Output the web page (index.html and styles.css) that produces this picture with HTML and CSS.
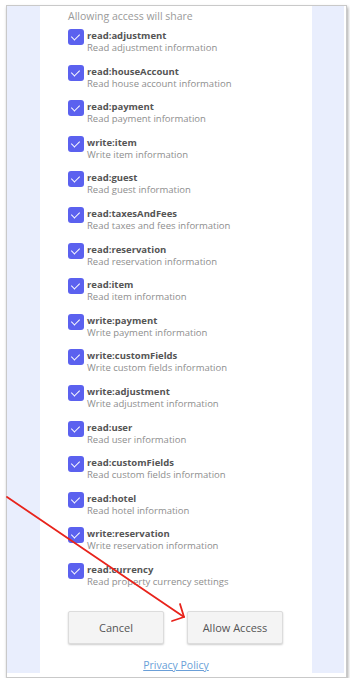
FILE: index.html
```html
<!DOCTYPE HTML>
<html lang="en">
    <head>
        <meta charset="UTF-8">
        <title>Allow Access</title>
        <meta name="viewport" content="width=device-width, initial-scale=1.0"/>
        <link rel="stylesheet" href="styles.css">
    </head>

    <body>
        <div class="frame">
            <div class="page">
                <div class="panel">
                    <p class="intro">Allowing access will share</p>

                    <ul class="scopes">
                        <li class="scope"><span class="check"></span><div><b>read:adjustment</b><span class="desc">Read adjustment information</span></div></li>
                        <li class="scope"><span class="check"></span><div><b>read:houseAccount</b><span class="desc">Read house account information</span></div></li>
                        <li class="scope"><span class="check"></span><div><b>read:payment</b><span class="desc">Read payment information</span></div></li>
                        <li class="scope"><span class="check"></span><div><b>write:item</b><span class="desc">Write item information</span></div></li>
                        <li class="scope"><span class="check"></span><div><b>read:guest</b><span class="desc">Read guest information</span></div></li>
                        <li class="scope"><span class="check"></span><div><b>read:taxesAndFees</b><span class="desc">Read taxes and fees information</span></div></li>
                        <li class="scope"><span class="check"></span><div><b>read:reservation</b><span class="desc">Read reservation information</span></div></li>
                        <li class="scope"><span class="check"></span><div><b>read:item</b><span class="desc">Read item information</span></div></li>
                        <li class="scope"><span class="check"></span><div><b>write:payment</b><span class="desc">Write payment information</span></div></li>
                        <li class="scope"><span class="check"></span><div><b>write:customFields</b><span class="desc">Write custom fields information</span></div></li>
                        <li class="scope"><span class="check"></span><div><b>write:adjustment</b><span class="desc">Write adjustment information</span></div></li>
                        <li class="scope"><span class="check"></span><div><b>read:user</b><span class="desc">Read user information</span></div></li>
                        <li class="scope"><span class="check"></span><div><b>read:customFields</b><span class="desc">Read custom fields information</span></div></li>
                        <li class="scope"><span class="check"></span><div><b>read:hotel</b><span class="desc">Read hotel information</span></div></li>
                        <li class="scope"><span class="check"></span><div><b>write:reservation</b><span class="desc">Write reservation information</span></div></li>
                        <li class="scope"><span class="check"></span><div><b>read:currency</b><span class="desc">Read property currency settings</span></div></li>
                    </ul>

                    <div class="actions">
                        <button class="button" type="button">Cancel</button>
                        <button class="button" type="button">Allow Access</button>
                    </div>

                    <div class="footer">
                        <a href="#">Privacy Policy</a>
                    </div>
                </div>
            </div>
        </div>

        <!-- annotation arrow -->
        <svg class="arrow" width="350" height="681" viewBox="0 0 350 681">
            <path d="M7 497 L184 617" />
            <path d="M172 621 L184 617 L180 604" />
        </svg>
    </body>
</html>
```

FILE: styles.css
```css
body {
    margin: 0;
    background: #fff;
    font-family: "Open Sans", "DejaVu Sans", sans-serif;
}

.frame {
    box-sizing: border-box;
    width: 341px;
    height: 673px;
    margin: 5px 0 0 6px;
    padding: 0 2px 4px 0;
    border: 1px solid #c9c9c9;
    box-shadow: 1px 2px 3px rgba(0, 0, 0, 0.35);
    background: #fff;
}
.page {
    height: 100%;
    padding: 0 32px 0 33px;
    background: #e9eefd;
    overflow: hidden;
}
.panel {
    height: 100%;
    padding: 0 0 0 28px;
    background: #fff;
}

.intro {
    margin: 0;
    padding-top: 3px;
    font-size: 10.5px;
    line-height: 14px;
    color: #9a9a9a;
}

/*SCOPES*/
.scopes {
    list-style: none;
    margin: 6px 0 0 0;
    padding: 0;
    display: flex;
    flex-direction: column;
    gap: 11.6px;
}
.scope {
    display: flex;
    gap: 3px;
    height: 24px;
}
.check {
    flex: none;
    width: 16px;
    height: 16px;
    border-radius: 3px;
    background: #5b61ef;
    position: relative;
}
.check::after {
    content: "";
    position: absolute;
    left: 5px;
    top: 3px;
    width: 4px;
    height: 7px;
    border: solid #fff;
    border-width: 0 1.6px 1.6px 0;
    transform: rotate(45deg);
}
.scope b {
    display: block;
    font-size: 9.5px;
    line-height: 12px;
    color: #555;
    margin-top: 1px;
}
.desc {
    display: block;
    font-size: 9.5px;
    line-height: 12px;
    color: #8e8e8e;
}
/*SCOPES*/

.actions {
    display: flex;
    gap: 23px;
    margin-top: 24px;
}
.button {
    width: 96px;
    height: 33px;
    padding: 0;
    font-family: inherit;
    font-size: 11px;
    color: #555;
    background: #f4f4f4;
    border: 1px solid #dcdcdc;
    border-radius: 2px;
    box-shadow: 0 1px 2px rgba(0, 0, 0, 0.2);
}

.footer {
    margin-left: -28px;
    margin-top: 15px;
    text-align: center;
    font-size: 10.5px;
    line-height: 13px;
}
.footer a {
    color: #6a9fd8;
}

.arrow {
    position: absolute;
    left: 0;
    top: 0;
    pointer-events: none;
}
.arrow path {
    fill: none;
    stroke: #e8231b;
    stroke-width: 1.8;
    stroke-linecap: round;
    stroke-linejoin: round;
}
```
